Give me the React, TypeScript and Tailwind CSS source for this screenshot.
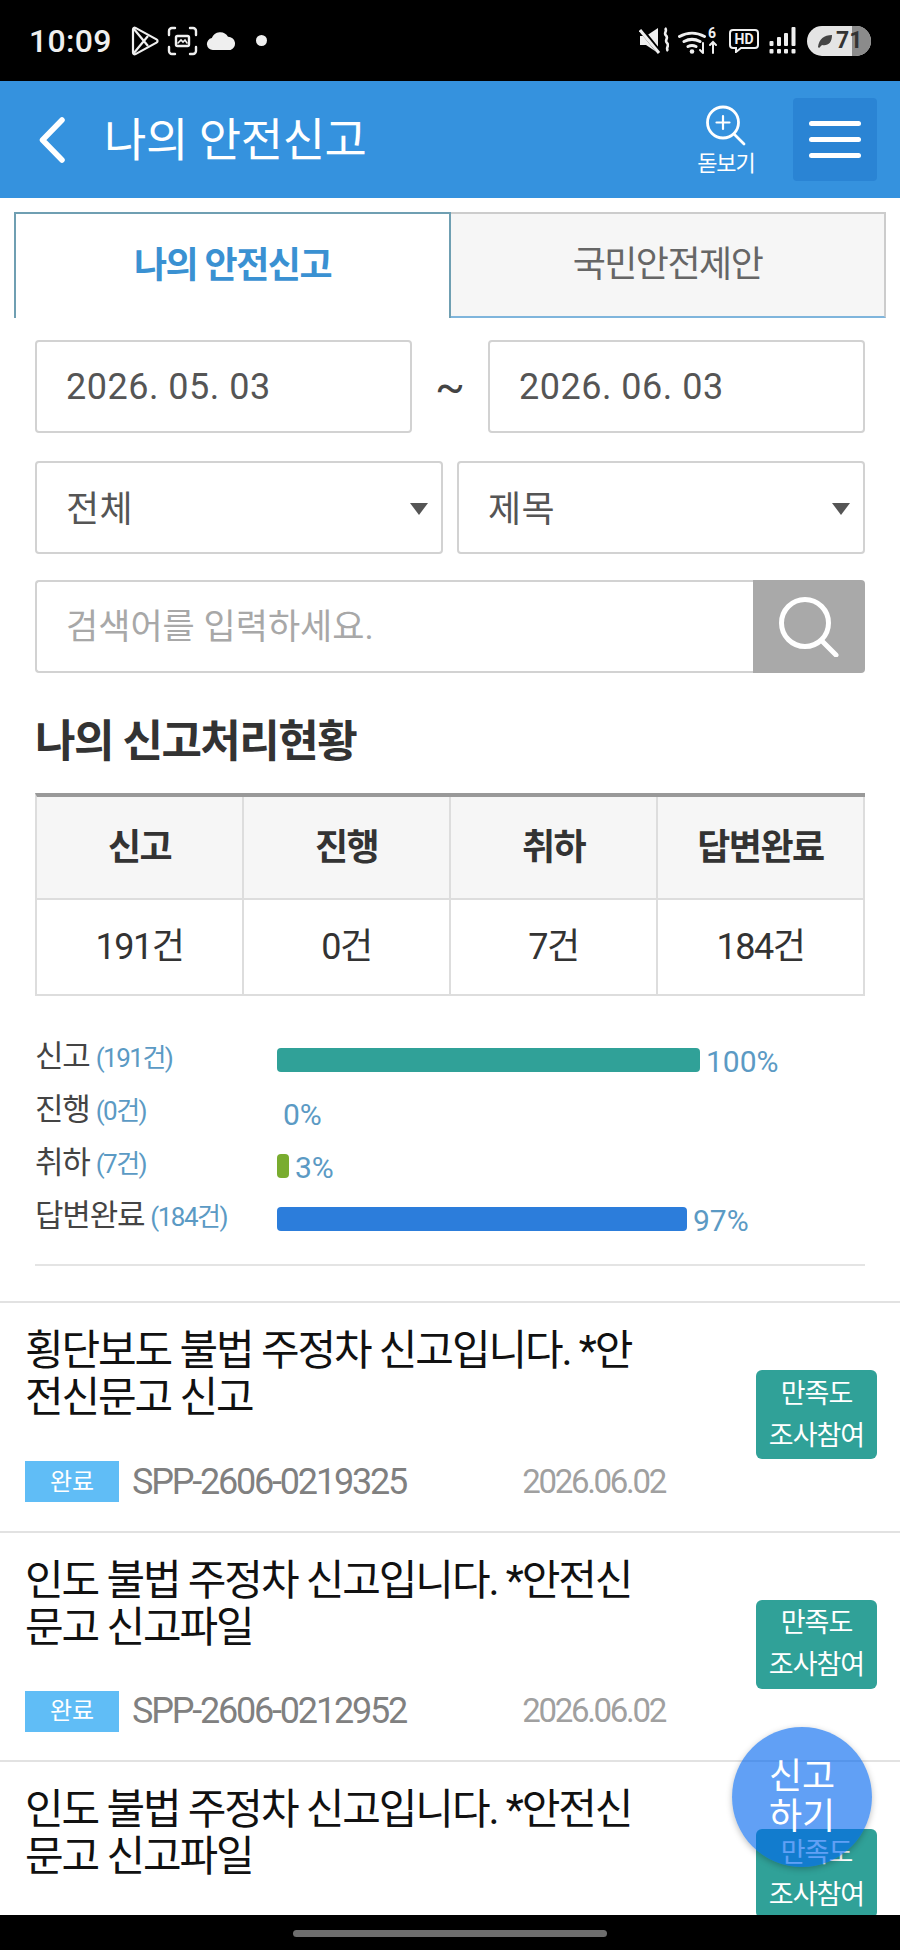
import React from "react";

const stats = [
  { label: "신고", count: "(191건)", pct: "100%", bar: "w-[423px] bg-[#30a198]" },
  { label: "진행", count: "(0건)", pct: "0%", bar: "w-0" },
  { label: "취하", count: "(7건)", pct: "3%", bar: "w-[12px] bg-[#79ac2f]" },
  { label: "답변완료", count: "(184건)", pct: "97%", bar: "w-[410px] bg-[#2c7ddb]" },
];

const summary = [
  { head: "신고", value: "191건" },
  { head: "진행", value: "0건" },
  { head: "취하", value: "7건" },
  { head: "답변완료", value: "184건" },
];

const reports = [
  { lines: ["횡단보도 불법 주정차 신고입니다. *안", "전신문고 신고"], code: "SPP-2606-0219325", date: "2026.06.02" },
  { lines: ["인도 불법 주정차 신고입니다. *안전신", "문고 신고파일"], code: "SPP-2606-0212952", date: "2026.06.02" },
  { lines: ["인도 불법 주정차 신고입니다. *안전신", "문고 신고파일"], code: "SPP-2606-0212952", date: "2026.06.02" },
];

const StatusBar = () => (
  <div className="h-[81px] shrink-0 bg-black flex items-center pl-[29px] pr-[29px] text-[#efefef]">
    <span className="text-[32px] font-medium leading-none w-[102px] tracking-[0.3px]">10:09</span>
    <svg width="28" height="30" viewBox="0 0 28 30" fill="none" stroke="currentColor" strokeWidth="2.2" strokeLinejoin="round">
      <path d="M2 3.5c0-1.5 1.3-2.2 2.500-1.600L25.500 13.400c1.400.8 1.400 2.400 0 3.200L4.500 28.100C3.300 28.700 2 28 2 26.500z" />
      <path d="M2.500 2.500 17 20M2.500 27.500 17 10" />
    </svg>
    <svg className="ml-[8px]" width="31" height="30" viewBox="0 0 31 30" fill="none" stroke="currentColor" strokeWidth="2.4" strokeLinecap="round">
      <path d="M2 9V5a3 3 0 0 1 3-3h3M23 2h3a3 3 0 0 1 3 3v4M29 21v4a3 3 0 0 1-3 3h-3M8 28H5a3 3 0 0 1-3-3v-4" />
      <rect x="9" y="10" width="13" height="10" rx="1.500" />
      <path d="m11 17 3-3 2 2 2-2 2 3" strokeWidth="1.600" />
    </svg>
    <svg className="ml-[8px]" width="31" height="18" viewBox="0 0 31 18" fill="currentColor">
      <path d="M7 18a6 6 0 0 1-1.200-11.900A9 9 0 0 1 22 4.800 6.800 6.800 0 0 1 24.500 18z" />
    </svg>
    <span className="ml-[19px] w-[11px] h-[11px] rounded-full bg-[#efefef]" />
    <svg className="ml-auto" width="30" height="28" viewBox="0 0 30 28" fill="currentColor">
      <path d="M1 9h6l12-8v25L7 18H1z" />
      <path d="M0 0 21 26" stroke="#000" strokeWidth="5" />
      <path d="M1 3 20 26" stroke="currentColor" strokeWidth="3" />
      <path d="M26 1c3 3-2 5 1 7.500s-2 5 1 7.500-2 5 1 8" fill="none" stroke="currentColor" strokeWidth="2.600" />
    </svg>
    <svg className="ml-[9px]" width="40" height="28" viewBox="0 0 40 28" fill="none" stroke="currentColor" strokeWidth="3" strokeLinecap="round">
      <path d="M1.500 9.500a25 25 0 0 1 25 0M6 14.500a17 17 0 0 1 16 0M10 19.500a9 9 0 0 1 8 0" />
      <circle cx="14" cy="24.500" r="2.300" fill="currentColor" stroke="none" />
      <path d="M25 16v10m-3-3 3 3M35 26V15m-3 3 3-3 3 3" strokeWidth="2" />
      <text x="30" y="11" fontSize="14" fontWeight="700" fill="currentColor" stroke="none">6</text>
    </svg>
    <svg className="ml-[11px]" width="30" height="24" viewBox="0 0 30 24" fill="none" stroke="currentColor" strokeWidth="2">
      <path d="M4 1h22a3 3 0 0 1 3 3v12a3 3 0 0 1-3 3H12l-5 4v-4H4a3 3 0 0 1-3-3V4a3 3 0 0 1 3-3z" />
      <text x="15" y="15" textAnchor="middle" fontSize="14" fontWeight="700" fill="currentColor" stroke="none">HD</text>
    </svg>
    <svg className="ml-[10px]" width="27" height="27" viewBox="0 0 27 27" fill="currentColor">
      <rect x="0.500" y="14" width="4" height="5" rx="1" />
      <rect x="8" y="10" width="4" height="9" rx="1" />
      <rect x="15" y="6" width="4" height="13" rx="1" />
      <rect x="22.500" y="0" width="4" height="19" rx="1" />
      <rect x="0.500" y="22" width="4" height="4.500" rx="1" />
      <rect x="8" y="22" width="4" height="4.500" rx="1" />
      <rect x="15" y="22" width="4" height="4.500" rx="1" />
      <rect x="22.500" y="22" width="4" height="4.500" rx="1" />
    </svg>
    <div className="ml-[11px] relative w-[64px] h-[30px] rounded-full bg-[#e4e4e4] overflow-hidden flex items-center pl-[10px] text-[#333]">
      <span className="absolute right-0 top-0 bottom-0 w-[19px] bg-[#8b8b8b]" />
      <svg className="relative" width="16" height="14" viewBox="0 0 16 14" fill="#444">
        <path d="M1 13C2 5 7 1 15 1c0 8-4 11-10 10l-3 3z" />
      </svg>
      <span className="relative ml-[3px] text-[23px] font-bold leading-none">71</span>
    </div>
  </div>
);

const Header = () => (
  <div className="h-[117px] shrink-0 bg-[#3592de] flex items-center text-white">
    <svg className="ml-[39px]" width="28" height="46" viewBox="0 0 28 46" fill="none" stroke="currentColor" strokeWidth="5.500" strokeLinecap="round" strokeLinejoin="round">
      <path d="M23 3 3.500 23 23 43" />
    </svg>
    <h1 className="ml-[37px] text-[46px] leading-none tracking-[-0.4px] font-normal">나의 안전신고</h1>
    <div className="ml-auto flex flex-col items-center w-[70px]">
      <svg width="42" height="42" viewBox="0 0 42 42" fill="none" stroke="currentColor" strokeWidth="2.800" strokeLinecap="round">
        <circle cx="18" cy="17.500" r="15.500" />
        <path d="M18 11v13M11.500 17.500h13" strokeWidth="2.200" />
        <path d="m29 29 10 10" />
      </svg>
      <span className="mt-[6px] text-[22px] leading-none tracking-[-1px]">돋보기</span>
    </div>
    <button className="ml-[32px] mr-[23px] w-[84px] h-[83px] rounded-[4px] bg-[#2a84d4] flex flex-col items-center justify-center gap-[11px]">
      <span className="w-[52px] h-[5px] rounded-full bg-white" />
      <span className="w-[52px] h-[5px] rounded-full bg-white" />
      <span className="w-[52px] h-[5px] rounded-full bg-white" />
    </button>
  </div>
);

const Tabs = () => (
  <div className="mt-[14px] ml-[14px] mr-[14px] h-[106px] flex">
    <div className="flex-1 border-t-2 border-x-2 border-[#6f9fb2] flex items-center justify-center text-[36px] font-bold text-[#3a91d2] tracking-[-1.5px]">
      나의 안전신고
    </div>
    <div className="flex-1 border-t-2 border-r-2 border-[#cccccc] border-b-2 border-b-[#7fb5dc] bg-[#f6f6f6] flex items-center justify-center text-[36px] text-[#666666] tracking-[-1.5px]">
      국민안전제안
    </div>
  </div>
);

const Field = ({ children, className }: { children: React.ReactNode; className: string }) => (
  <div className={`h-[93px] border-2 border-[#d2d2d2] rounded-[4px] flex items-center pl-[29px] text-[36px] text-[#555555] tracking-[0.5px] ${className}`}>
    {children}
  </div>
);

const Caret = () => <span className="absolute right-[13px] top-[40px] w-0 h-0 border-x-[9px] border-x-transparent border-t-[12px] border-t-[#555555]" />;

const Filters = () => (
  <div className="px-[35px] flex flex-col">
    <div className="mt-[22px] flex items-center justify-between">
      <Field className="w-[377px]">2026. 05. 03</Field>
      <span className="text-[44px] leading-none text-[#444444]">~</span>
      <Field className="w-[377px]">2026. 06. 03</Field>
    </div>
    <div className="mt-[28px] flex justify-between">
      <Field className="relative w-[408px] pt-[4px]">전체<Caret /></Field>
      <Field className="relative w-[408px] pt-[4px]">제목<Caret /></Field>
    </div>
    <div className="mt-[26px] flex h-[93px]">
      <div className="flex-1 border-2 border-r-0 border-[#d2d2d2] rounded-l-[4px] flex items-center pl-[29px] pt-[4px] text-[35px] text-[#a8a8a8]">
        검색어를 입력하세요.
      </div>
      <div className="w-[112px] bg-[#a9a9a9] rounded-r-[4px] flex items-center justify-center">
        <svg width="60" height="60" viewBox="0 0 60 60" fill="none" stroke="white" strokeWidth="5" strokeLinecap="round">
          <circle cx="26" cy="26" r="23.500" />
          <path d="m43 44 14 14" />
        </svg>
      </div>
    </div>
  </div>
);

const Summary = () => (
  <div className="px-[35px]">
    <h2 className="mt-[41px] text-[44px] leading-[56px] font-bold text-[#333333] tracking-[-1.5px]">나의 신고처리현황</h2>
    <div className="mt-[23px] border-t-4 border-[#999999] grid grid-cols-4 border-l-2 border-l-[#dddddd]">
      {summary.map((s) => (
        <div key={s.head} className="border-r-2 border-[#dddddd] flex flex-col">
          <div className="h-[103px] bg-[#f6f6f6] border-b-2 border-[#dddddd] flex items-center justify-center text-[36px] font-bold text-[#333333] tracking-[-1.5px]">
            {s.head}
          </div>
          <div className="h-[96px] border-b-2 border-[#dddddd] flex items-center justify-center text-[36px] text-[#333333] tracking-[-1.5px]">
            {s.value}
          </div>
        </div>
      ))}
    </div>
    <div className="mt-[37px] flex flex-col">
      {stats.map((s) => (
        <div key={s.label} className="h-[53px] flex items-center">
          <div className="w-[242px] mb-[5px] flex items-baseline text-[#444444] text-[31px] tracking-[-1.2px]">
            {s.label}
            <span className="ml-[6px] text-[26px] text-[#5b9ac4] tracking-[-1.5px]">{s.count}</span>
          </div>
          <div className={`h-[24px] rounded-[4px] ${s.bar}`} />
          <span className="ml-[6px] mt-[3px] text-[30px] text-[#5b9ac4]">{s.pct}</span>
        </div>
      ))}
    </div>
    <div className="mt-[19px] border-t-2 border-[#e4e4e4]" />
  </div>
);

const ReportList = () => (
  <div className="mt-[35px]">
    {reports.map((r, i) => (
      <div key={i} className="h-[229.500px] border-t-2 border-[#e2e2e2] flex items-center pl-[25px] pr-[23px] justify-between">
        <div className="w-[640px] h-full flex flex-col">
          <div className="mt-[24px] text-[42px] leading-[47px] text-[#111111] tracking-[-2.100px]">
            {r.lines.map((l) => (
              <div key={l}>{l}</div>
            ))}
          </div>
          <div className="mt-[40px] h-[41px] flex items-center">
            <span className="w-[94px] h-[41px] bg-[#60bdf6] flex items-center justify-center text-white text-[24px]">완료</span>
            <span className="ml-[13px] text-[36px] text-[#808080] tracking-[-2.200px]">{r.code}</span>
            <span className="ml-auto text-[33px] text-[#a0a0a0] tracking-[-2.300px]">{r.date}</span>
          </div>
        </div>
        <button className="mb-[4px] w-[121px] h-[89px] rounded-[6px] bg-[#30a198] text-white text-[27px] leading-[42px] tracking-[-1px]">
          만족도
          <br />
          조사참여
        </button>
      </div>
    ))}
  </div>
);

export default function App() {
  return (
    <div
      className="relative w-[900px] h-[1950px] overflow-hidden bg-white flex flex-col"
      style={{ fontFamily: 'Roboto, "Noto Sans CJK KR", sans-serif' }}
    >
      <StatusBar />
      <Header />
      <div className="flex-1 min-h-0 overflow-hidden">
        <Tabs />
        <Filters />
        <Summary />
        <ReportList />
      </div>
      <div className="h-[35px] shrink-0 bg-black flex justify-center pt-[15px]">
        <span className="w-[314px] h-[7px] rounded-full bg-[#6e6e6e]" />
      </div>
      <div className="absolute left-[732px] top-[1727px] w-[140px] h-[140px] rounded-full bg-[#0066ef]/[0.62] shadow-[0_2px_6px_rgba(0,0,0,0.25)] flex items-center justify-center text-center text-white text-[36px] leading-[40px]">
        신고
        <br />
        하기
      </div>
    </div>
  );
}
